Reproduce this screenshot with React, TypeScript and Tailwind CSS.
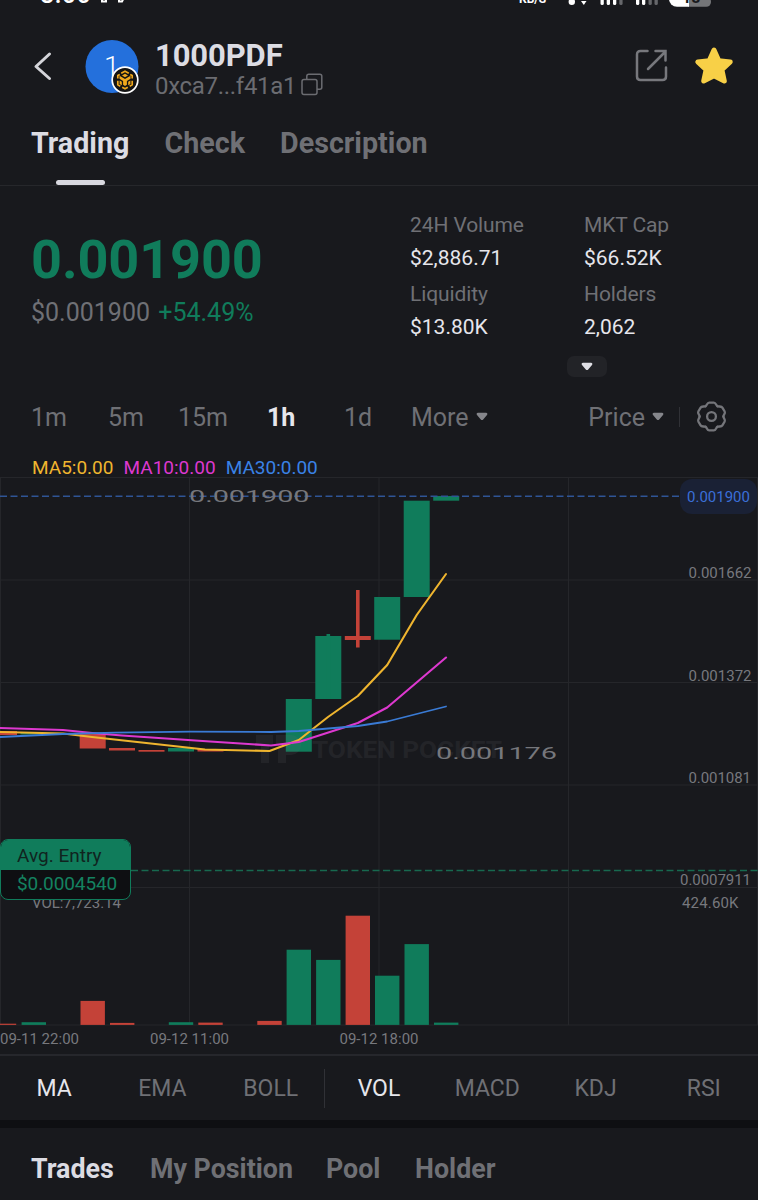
import clsx from 'clsx';

const GREEN = '#107c5b';
const RED = '#c44238';

const tabs = [
  { label: 'Trading', active: true },
  { label: 'Check' },
  { label: 'Description' },
];

const stats = [
  { label: '24H Volume', value: '$2,886.71' },
  { label: 'MKT Cap', value: '$66.52K' },
  { label: 'Liquidity', value: '$13.80K' },
  { label: 'Holders', value: '2,062' },
];

const intervals = [
  { label: '1m', width: 'w-[77px]' },
  { label: '5m', width: 'w-[70px]' },
  { label: '15m', width: 'w-[89px]' },
  { label: '1h', width: 'w-[77px]', active: true },
  { label: '1d', width: 'w-[67px]' },
];

const indicators = [
  { label: 'MA', active: true },
  { label: 'EMA' },
  { label: 'BOLL' },
  { label: 'VOL', active: true },
  { label: 'MACD' },
  { label: 'KDJ' },
  { label: 'RSI' },
];

const bottomTabs = [
  { label: 'Trades', width: 'w-[119px]', active: true },
  { label: 'My Position', width: 'w-[176px]' },
  { label: 'Pool', width: 'w-[89px]' },
  { label: 'Holder', width: 'w-[90px]' },
];

// x is the candle centre, the rest are y positions inside the chart
const candles = [
  { x: 4, top: 254, bottom: 258, color: RED },
  { x: 33.5, top: 255.5, bottom: 257.5, color: GREEN },
  { x: 92.7, top: 257, bottom: 271.5, color: RED },
  { x: 122, top: 271, bottom: 273.5, color: RED },
  { x: 151.5, top: 273, bottom: 274.7, color: RED },
  { x: 181, top: 271, bottom: 274.5, color: GREEN },
  { x: 210.5, top: 272, bottom: 274.5, color: RED },
  { x: 298.8, top: 222, bottom: 274.7, color: GREEN },
  { x: 328.3, top: 159, bottom: 222, high: 157, color: GREEN },
  { x: 357.8, top: 159, bottom: 163, high: 113, low: 170.5, color: RED },
  { x: 387.2, top: 120, bottom: 162.7, color: GREEN },
  { x: 416.7, top: 23.7, bottom: 120, color: GREEN },
  { x: 446.2, top: 19, bottom: 23.7, color: GREEN },
];

const volumes = [
  { x: 4, h: 1.2, color: RED },
  { x: 33.8, h: 2.7, color: GREEN },
  { x: 92.7, h: 24, color: RED },
  { x: 122.2, h: 2, color: RED },
  { x: 181, h: 2.7, color: GREEN },
  { x: 210.5, h: 2.3, color: RED },
  { x: 269.5, h: 4, color: RED },
  { x: 298.8, h: 75.2, color: GREEN },
  { x: 328.3, h: 65, color: GREEN },
  { x: 357.8, h: 109.2, color: RED },
  { x: 387.2, h: 49.2, color: GREEN },
  { x: 416.7, h: 80.8, color: GREEN },
  { x: 446.2, h: 2.3, color: GREEN },
];

const priceLabels = [
  { text: '0.001662', y: 101, x: 688.5, w: 63 },
  { text: '0.001372', y: 203.5, x: 688.5, w: 63 },
  { text: '0.001081', y: 306, x: 688.5, w: 62.5 },
  { text: '0.0007911', y: 408, x: 680, w: 71 },
  { text: '424.60K', y: 431, x: 682, w: 56.5 },
];

const timeLabels = [
  { text: '09-11 22:00', x: 0 },
  { text: '09-12 11:00', x: 150 },
  { text: '09-12 18:00', x: 339.5 },
];

const Caret = ({ className }: { className?: string }) => (
  <svg viewBox="0 0 12 9" className={clsx('h-[9px] w-3', className)} fill="currentColor">
    <path d="M2 .8h8c1.3 0 1.8 1.2 1 2.1L7.2 7.5c-.7.8-1.700.8-2.400 0L1 2.900C.2 2 .7.8 2 .8z" />
  </svg>
);

const GearIcon = () => (
  <svg className="mr-[30px] ml-[15px] -mt-[3px]" width="33" height="33" viewBox="-16.500 -16.500 33 33" fill="none" stroke="#74757a" strokeWidth="2.300" strokeLinecap="round">
    {[0, 60, 120, 180, 240, 300].map(deg => (
      <path
        key={deg}
        d="M-5.950-10.300C-4.400-11.200-4.500-13.900-2.300-13.900H2.300C4.500-13.900 4.400-11.200 5.950-10.300"
        transform={`rotate(${deg})`}
      />
    ))}
    <circle r="4.400" />
  </svg>
);

const StatusBar = () => (
  <div className="relative h-3 overflow-hidden text-white">
    <span className="absolute left-[40px] -top-[19px] text-[25px] leading-7 font-medium tracking-[0.5px]">8:00</span>
    <svg className="absolute left-[98px] top-0" width="30" height="5" fill="none" stroke="#fff" strokeWidth="2">
      <path d="M4 -2v3.500h4v-4M21 -2v3.500h3l2-4" />
    </svg>
    <span className="absolute left-[519px] -top-[8px] text-[12px] leading-[15px] font-bold">KB/S</span>
    <svg className="absolute left-[560px] top-0" width="160" height="9">
      <circle cx="11.800" cy="1.800" r="3.200" fill="#fff" />
      <path d="M21 1h5.500L23.800 5z" fill="#fff" />
      <g fill="#fff">
        <rect x="40.500" y="-2" width="3.300" height="7" rx="1.500" />
        <rect x="46.700" y="-2" width="3.300" height="7" rx="1.500" />
        <rect x="53" y="-2" width="3.300" height="7" rx="1.500" />
        <rect x="76" y="-2" width="3.300" height="7" rx="1.500" />
        <rect x="82" y="-2" width="3.300" height="7" rx="1.500" />
      </g>
      <g fill="#66676b">
        <rect x="59.300" y="-2" width="3.300" height="7" rx="1.500" />
        <rect x="88.500" y="-2" width="3.300" height="7" rx="1.500" />
        <rect x="94.500" y="-2" width="3.300" height="7" rx="1.500" />
      </g>
      <path d="M128-6h15a8 8 0 0 1 8 8a4.800 4.800 0 0 1-4.800 4.800H128z" fill="#747578" />
      <path d="M109-6h20V6.800H117a8 8 0 0 1-8-8z" fill="#fff" />
      <text x="122" y="3" fontSize="16" fontWeight="700" fill="#18191d">18</text>
    </svg>
  </div>
);

const TokenLogo = () => (
  <div className="relative ml-[32px] mr-px size-[54px]">
    <svg width="54" height="54" viewBox="0 0 54 54">
      <circle cx="27" cy="27.500" r="26.500" fill="#2470dc" />
      <text x="19" y="37" fontSize="28" fontWeight="300" fill="#fff">1</text>
    </svg>
    <svg className="absolute left-[26px] top-[27px]" width="28" height="28" viewBox="0 0 28 28">
      <circle cx="14" cy="14" r="12.800" fill="#141414" stroke="#fff" strokeWidth="1.700" />
      <g fill="none" stroke="#f0a81c" strokeWidth="1.700" strokeLinejoin="round">
        <path d="M10.200 7.300L14 5.200l3.800 2.100M6.800 12.500V9.600l2-1.200M21.200 12.500V9.600l-2-1.200M6.800 14.800v4l2.500 1.400M21.200 14.800v4l-2.500 1.400M11.200 21.300L14 22.800l2.800-1.500" />
      </g>
      <path d="M14 7.800l3 1.700-3 1.700-3-1.700zM8.500 9.800l5.500 3.200 5.500-3.200v3l-3.600 2.100v3.900L14 20l-1.900-1.200v-3.900l-3.600-2.100zM8.600 14.500l2.200 1.300v3.400l-2.200-1.300zM19.400 14.500l-2.200 1.300v3.400l2.200-1.300z" fill="#f0a81c" />
    </svg>
  </div>
);

const Header = () => (
  <header className="flex h-[107px] items-center">
    <svg className="ml-[33px] w-5" height="30" viewBox="0 0 20 30" fill="none" stroke="#d4d5da" strokeWidth="3" strokeLinecap="round" strokeLinejoin="round">
      <path d="M16.500 3L3 15.500l13.500 12" />
    </svg>
    <TokenLogo />
    <div className="ml-[15px] flex-1 pt-[7px]">
      <h1 className="text-[31px] leading-[34px] font-bold tracking-[-0.1px] text-[#dcdce3]">1000PDF</h1>
      <div className="flex items-center text-[24px] leading-[27px] text-[#6b6c71]">
        <span className="tracking-[-0.300px]">0xca7...f41a1</span>
        <svg className="ml-[5px] -mt-[3px]" width="22" height="23" viewBox="0 0 22 23" fill="none" stroke="currentColor" strokeWidth="1.500">
          <rect x="1" y="6.500" width="15" height="15" rx="2" />
          <path d="M5.800 6.500V3.300c0-1.300.7-2 2-2h11c1.300 0 2 .7 2 2v11c0 1.300-.7 2-2 2H16" />
        </svg>
      </div>
    </div>
    <svg className="mr-[26px]" width="33" height="33" viewBox="0 0 33 33" fill="none" stroke="#77787d" strokeWidth="2.500" strokeLinecap="round">
      <path d="M12.500 2H5.500C3.200 2 2 3.200 2 5.500v22C2 29.800 3.200 31 5.500 31h22c2.300 0 3.500-1.200 3.500-3.500v-9" />
      <path d="M13 20L30 3M20.500 2H30.500V11.500" />
    </svg>
    <svg className="mr-6" width="40" height="40" viewBox="0 0 40 40">
      <path
        d="M20 4l4.800 10.700 11.400 1.200-8.300 7.800 2.400 11.300L20 29.800 9.700 35l2.400-11.300-8.300-7.800 11.400-1.200z"
        fill="#f8d047"
        stroke="#f8d047"
        strokeWidth="5"
        strokeLinejoin="round"
      />
    </svg>
  </header>
);

const Chart = () => (
  <div className="relative h-[577px]">
    <svg className="block" width="758" height="577" viewBox="0 0 758 577">
      {/* Grid */}
      <path
        d="M0 .5H758M0 103H758M0 205.500H758M0 308H758M0 410.500H758M0 548H758M.5 0V548M189.500 0V548M379 0V548M568.500 0V548M757.500 0V548"
        stroke="#25262a"
      />

      {/* Candles */}
      {candles.map(c => (
        <g key={c.x} fill={c.color}>
          <rect x={c.x - 13} y={c.top} width="26" height={c.bottom - c.top} />
          {c.high && <rect x={c.x - 1.8} y={c.high} width="3.600" height={(c.low ?? c.bottom) - c.high} />}
        </g>
      ))}

      {/* Watermark */}
      <g fill="#6f7076" opacity="0.13">
        <path d="M256 258h17v9h-4v19h-8v-19h-5zM276 258h15a10 10 0 0 1 0 20h-5v8h-8v-19h-2z" />
        <text x="312" y="280.500" fontSize="24" fontWeight="700" textLength="190" lengthAdjust="spacingAndGlyphs">TOKEN POCKET</text>
      </g>

      {/* Moving averages */}
      <g fill="none" strokeWidth="2.100" strokeLinejoin="round" strokeLinecap="round">
        <path d="M0 255L63 256.500L92 260L205 272.500L269.500 274L298.800 263L328 240L357.800 219L387.200 188L416.700 138L446 97" stroke="#efb52f" />
        <path d="M0 251L63 253L92 256L122 258.500L210 264.500L271 268.500L298.800 265L357.800 246L387.200 230.500L446 180.500" stroke="#dd38cf" />
        <path d="M0 260L63 257L115 255.700L190 254.600L271 255L298.800 254L357.800 249L387.200 244.500L446 229.500" stroke="#3a7bd5" strokeWidth="1.800" />
      </g>

      {/* Volume */}
      {volumes.map(v => (
        <rect key={v.x} x={v.x - 12.2} y={547.9 - v.h} width="24.400" height={v.h} fill={v.color} />
      ))}

      {/* Last price and average entry lines */}
      <path d="M0 19.300H681" stroke="#2f5596" strokeWidth="1.500" strokeDasharray="7 3.500" />
      <path d="M131 393.500H758" stroke="#17694f" strokeWidth="1.300" strokeDasharray="7 3.500" />

      {/* High and low marks */}
      <g fontSize="16" fill="#76777c">
        <text x="189" y="25" textLength="120.500" lengthAdjust="spacingAndGlyphs">0.001900</text>
        <text x="436" y="281.500" textLength="121" lengthAdjust="spacingAndGlyphs">0.001176</text>
      </g>

      {/* Axes */}
      <g fontSize="15" fill="#77787d">
        {priceLabels.map(l => (
          <text key={l.text} x={l.x} y={l.y} textLength={l.w}>{l.text}</text>
        ))}
        {timeLabels.map(l => (
          <text key={l.text} x={l.x} y="567" textLength="79">{l.text}</text>
        ))}
        <text x="32" y="431" textLength="89">VOL:7,723.14</text>
      </g>
    </svg>

    <div className="absolute left-[680px] top-[2px] flex h-[35px] w-[77px] items-center justify-center rounded-[12px] bg-[#1a2135] pt-px text-[15px] text-[#3a6fd8]">
      0.001900
    </div>

    <div className="absolute left-0 top-[362px] h-[61px] w-[131px] overflow-hidden rounded-[8px] border border-[#107c5b] bg-[#0e0f12] text-[19px]">
      <div className="h-[30px] bg-[#107c5b] pl-[16px] leading-[31px] text-[#10241f]">Avg. Entry</div>
      <div className="pl-[16px] leading-[28px] tracking-[-0.1px] text-[#148260]">$0.0004540</div>
    </div>
  </div>
);

const App = () => {
  return (
    <div className="flex h-[1200px] w-[758px] flex-col overflow-hidden bg-[#18191d] font-[Roboto,sans-serif] text-[#6f7075]">
      <StatusBar />
      <Header />

      {/* Tabs */}
      <nav className="flex h-[67px] gap-[35px] border-b border-[#26272b] pl-[31px] text-[28.700px] font-bold">
        {tabs.map(t => (
          <div key={t.label} className={clsx('flex flex-col items-center justify-between pt-[3px]', t.active && 'text-[#dcdce3]')}>
            <span className="leading-[42px]">{t.label}</span>
            {t.active && <span className="h-[5px] w-[49px] rounded-full bg-[#d8d8df]" />}
          </div>
        ))}
      </nav>

      {/* Price and stats */}
      <section className="flex h-[200px]">
        <div className="w-[410px] pl-[31px] pt-[42px]">
          <div className="text-[54px] leading-[64px] font-bold tracking-[-0.1px] text-[#107c5b]">0.001900</div>
          <div className="mt-[6px] text-[25px] leading-[30px]">
            $0.001900 <span className="ml-[2px] text-[#107c5b]">+54.49%</span>
          </div>
        </div>
        <div className="pt-[23px]">
          <div className="grid grid-cols-[174px_174px] gap-y-[3px] text-[21px] leading-[33px]">
            {stats.map(s => (
              <div key={s.label}>
                <div className="tracking-[-0.1px]">{s.label}</div>
                <div className="text-[#e6e6ec]">{s.value}</div>
              </div>
            ))}
          </div>
          <div className="mt-[12px] ml-[157px] flex h-[21px] w-10 items-center justify-center rounded-[7px] bg-[#222327] text-[#dedee4]">
            <Caret />
          </div>
        </div>
      </section>

      {/* Intervals */}
      <section className="flex h-[62px] items-center pl-[31px] pt-[2px] text-[25px]">
        {intervals.map(i => (
          <span key={i.label} className={clsx(i.width, i.active && 'font-bold text-[#e6e6ec]')}>{i.label}</span>
        ))}
        <span>More</span>
        <Caret className="ml-[7px] -mt-[4px] text-[#85868b]" />
        <span className="ml-auto">Price</span>
        <Caret className="ml-[7px] -mt-[4px] text-[#85868b]" />
        <span className="ml-[15px] -mt-[2px] h-5 w-px bg-[#303136]" />
        <GearIcon />
      </section>

      <div className="flex h-[29px] gap-[10px] pl-8 pt-[6px] text-[19px] leading-[28px]">
        <span className="text-[#efb52f]">MA5:0.00</span>
        <span className="text-[#dd38cf]">MA10:0.00</span>
        <span className="text-[#3a82e6]">MA30:0.00</span>
      </div>

      <Chart />

      {/* Indicators */}
      <section className="relative flex h-[66px] items-center border-t-2 border-[#26272c] pt-[3px] text-[23px]">
        {indicators.map(i => (
          <span key={i.label} className={clsx('w-[108.300px] text-center', i.active && 'text-[#e6e6ec]')}>{i.label}</span>
        ))}
        <span className="absolute left-[324px] top-[13px] h-[39px] w-px bg-[#303136]" />
      </section>
      <div className="h-2 bg-[#0e0f12]" />

      {/* Bottom tabs */}
      <nav className="flex h-[72px] items-center pl-[31px] pt-[10px] text-[26.800px] font-bold">
        {bottomTabs.map(t => (
          <span key={t.label} className={clsx(t.width, 'whitespace-nowrap', t.active && 'text-[#dcdce3]')}>{t.label}</span>
        ))}
      </nav>
    </div>
  );
};

export default App;
